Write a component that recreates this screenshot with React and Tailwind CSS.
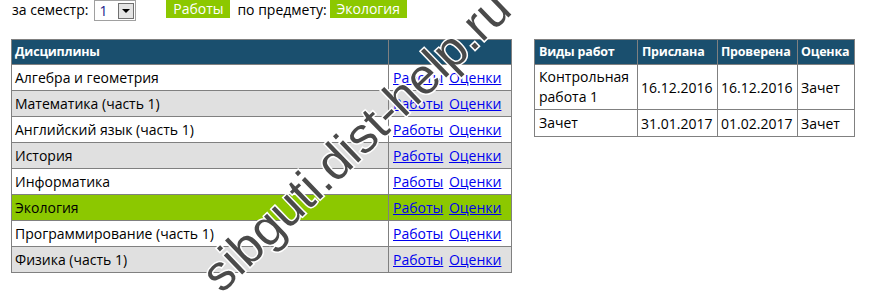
import React from 'react';

const subjects = [
  'Алгебра и геометрия',
  'Математика (часть 1)',
  'Английский язык (часть 1)',
  'История',
  'Информатика',
  'Экология',
  'Программирование (часть 1)',
  'Физика (часть 1)',
];

const works = [
  { name: ['Контрольная', 'работа 1'], sent: '16.12.2016', checked: '16.12.2016', mark: 'Зачет' },
  { name: ['Зачет'], sent: '31.01.2017', checked: '01.02.2017', mark: 'Зачет' },
];

const th = 'border border-[#808080] text-left font-bold text-[12.5px] tracking-[-0.2px]';

const App = () => {
  return (
    <div className="relative w-[877px] h-[299px] overflow-hidden bg-white text-[14px] text-black font-['Open_Sans',sans-serif]">
      {/* top filter row */}
      <div className="flex items-start h-[22px] pl-3">
        <span className="mt-[-1px]">за семестр:</span>
        <div className="ml-[6px] flex items-center h-[21px] w-[42px] border border-[#a0a0a0] bg-white">
          <span className="flex-1 pl-[4px] leading-none text-[#1a1a8a]">1</span>
          <span className="flex items-center justify-center w-[16px] h-[16px] mr-[1px] border border-[#707070] bg-[#e4e4e4]">
            <span className="w-0 h-0 border-l-[4px] border-r-[4px] border-t-[4px] border-l-transparent border-r-transparent border-t-black" />
          </span>
        </div>
        <span className="ml-[30px] w-[64px] h-[18px] text-center leading-[18px] bg-[#8cc800] text-white">Работы</span>
        <span className="ml-[7px] mt-[-1px]">по предмету:</span>
        <span className="ml-[3px] w-[77px] h-[18px] text-center leading-[18px] bg-[#8cc800] text-white">Экология</span>
      </div>

      <div className="flex items-start mt-[17px] pl-[11px] gap-[22px]">
        <table className="border-collapse w-[501px] table-fixed">
          <thead>
            <tr className="bg-[#1a4f6e] text-white h-[25px]">
              <th className={th + ' px-[3px]'}>Дисциплины</th>
              <th className="border border-[#808080] w-[123px]"></th>
            </tr>
          </thead>
          <tbody>
            {subjects.map((s, i) => (
              <tr
                key={s}
                className={
                  'h-[26px] ' +
                  (s === 'Экология' ? 'bg-[#8cc800]' : i % 2 === 1 ? 'bg-[#e0e0e0]' : 'bg-white')
                }
              >
                <td className="border border-[#808080] px-[3px]">{s}</td>
                <td className="border border-[#808080] px-[4px] whitespace-nowrap">
                  <a href="#" className="text-[#0000ee] underline">Работы</a>{' '}
                  <a href="#" className="ml-[2px] text-[#0000ee] underline">Оценки</a>
                </td>
              </tr>
            ))}
          </tbody>
        </table>

        <table className="border-collapse table-fixed w-[320px]">
          <thead>
            <tr className="bg-[#1a4f6e] text-white h-[25px]">
              <th className={th + ' px-[4px] w-[103px]'}>Виды работ</th>
              <th className={th + ' px-[4px] w-[80px]'}>Прислана</th>
              <th className={th + ' px-[3px] w-[80px]'}>Проверена</th>
              <th className={th + ' px-[3px] w-[57px]'}>Оценка</th>
            </tr>
          </thead>
          <tbody>
            {works.map((w, i) => (
              <tr key={i} className={i === 0 ? 'h-[45px]' : 'h-[27px]'}>
                <td className="border border-[#808080] px-[4px] leading-[20px]">
                  {w.name.map((n) => (
                    <div key={n}>{n}</div>
                  ))}
                </td>
                <td className="border border-[#808080] px-[3px]">{w.sent}</td>
                <td className="border border-[#808080] px-[3px]">{w.checked}</td>
                <td className="border border-[#808080] px-[3px]">{w.mark}</td>
              </tr>
            ))}
          </tbody>
        </table>
      </div>

      {/* watermark */}
      <div className="absolute left-[356px] top-[141px] -translate-x-1/2 -translate-y-1/2 -rotate-[44deg] whitespace-nowrap text-[50px] leading-none text-[#4a4a4a] font-['Liberation_Sans',sans-serif] [-webkit-text-stroke:3px_white] [paint-order:stroke_fill] pointer-events-none">
        sibguti.dist-help.ru
      </div>
    </div>
  );
};

export default App;
